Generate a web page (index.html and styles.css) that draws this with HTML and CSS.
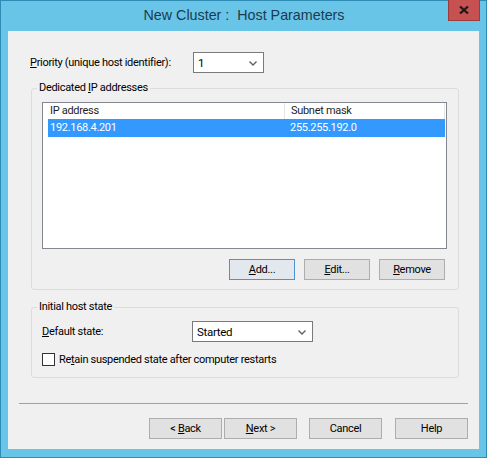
FILE: index.html
```html
<!DOCTYPE html>
<html>
<head>
<meta charset="utf-8">
<link rel="stylesheet" href="styles.css">
</head>
<body>
<div class="window">
  <div class="titlebar">
    <div class="title">New Cluster :&nbsp; Host Parameters</div>
    <div class="close">
      <svg width="10" height="8" viewBox="0 0 10 8"><path d="M1 0.5 L9 7.5 M9 0.5 L1 7.5" stroke="#1a1a1a" stroke-width="2.2" fill="none"/></svg>
    </div>
  </div>
  <div class="client">
    <div class="priority-row">
      <span class="priority-label"><u>P</u>riority (unique host identifier):</span>
      <div class="combo combo-priority">
        <span class="combo-text">1</span>
        <svg class="chev" width="8" height="5" viewBox="0 0 8 5"><path d="M0.5 0.5 L4 4 L7.5 0.5" stroke="#606060" stroke-width="1.4" fill="none"/></svg>
      </div>
    </div>

    <div class="group group-ip">
      <span class="legend">Dedicated <u>I</u>P addresses</span>
      <div class="list">
        <div class="list-head">
          <div class="col col1">IP address</div>
          <div class="col col2">Subnet mask</div>
        </div>
        <div class="list-row selected">
          <div class="col col1">192.168.4.201</div>
          <div class="col col2">255.255.192.0</div>
        </div>
      </div>
      <div class="btn-row">
        <button class="btn btn-default"><span><u>A</u>dd...</span></button>
        <button class="btn"><span><u>E</u>dit...</span></button>
        <button class="btn"><span><u>R</u>emove</span></button>
      </div>
    </div>

    <div class="group group-state">
      <span class="legend">Initial host state</span>
      <div class="state-row">
        <span class="state-label"><u>D</u>efault state:</span>
        <div class="combo combo-state">
          <span class="combo-text">Started</span>
          <svg class="chev" width="8" height="5" viewBox="0 0 8 5"><path d="M0.5 0.5 L4 4 L7.5 0.5" stroke="#606060" stroke-width="1.4" fill="none"/></svg>
        </div>
      </div>
      <div class="check-row">
        <span class="checkbox"></span>
        <span class="check-label">Re<u>t</u>ain suspended state after computer restarts</span>
      </div>
    </div>

    <div class="separator"></div>

    <div class="footer">
      <button class="btn btn-wide"><span>&lt; <u>B</u>ack</span></button>
      <button class="btn btn-wide btn-next"><span><u>N</u>ext &gt;</span></button>
      <button class="btn btn-wide btn-cancel"><span>Cancel</span></button>
      <button class="btn btn-wide btn-help"><span>Help</span></button>
    </div>
  </div>
</div>
</body>
</html>
```
FILE: styles.css
```css
* { box-sizing: border-box; }
html, body { margin: 0; padding: 0; }
body {
  width: 487px;
  height: 458px;
  overflow: hidden;
  font-family: Roboto, "Liberation Sans", Arial, sans-serif;
  font-size: 11px;
  letter-spacing: -0.3px;
  color: #000;
  white-space: nowrap;
}
.window {
  width: 487px;
  height: 458px;
  background: #68c5e8;
  border: 1px solid #2e8bb3;
  display: flex;
  flex-direction: column;
}
.titlebar {
  height: 30px;
  position: relative;
  display: flex;
  justify-content: center;
  align-items: center;
  flex: none;
}
.title {
  font-family: "Liberation Sans", Arial, sans-serif;
  font-size: 14.3px;
  letter-spacing: 0;
  color: #1c3b4f;
  margin-top: -2px;
  margin-left: 1px;
}
.close {
  position: absolute;
  top: -1px;
  right: 6px;
  width: 32px;
  height: 21px;
  background: #c75050;
  border: 1px solid #9c3b3b;
  border-top: none;
  display: flex;
  align-items: center;
  justify-content: center;
}
.client {
  flex: 1;
  margin: 0 7px 8px 7px;
  background: #f0f0f0;
  padding: 21px 11px 0 0;
  display: flex;
  flex-direction: column;
}
.priority-row {
  display: flex;
  align-items: center;
  height: 21px;
  margin-left: 22px;
}
.priority-label { width: 163px; }
.combo {
  height: 21px;
  background: #fff;
  border: 1px solid #7a7a7a;
  display: flex;
  align-items: center;
  justify-content: space-between;
  padding: 0 6px 0 4px;
  font-size: 11.5px;
}
.combo-priority { width: 71px; }
.combo-state { width: 121px; }
.chev { flex: none; margin-top: 1px; }

.group {
  position: relative;
  margin-left: 23px;
  width: 428px;
  border: 1px solid #dcdcdc;
  border-radius: 3px;
}
.legend {
  position: absolute;
  left: 5px;
  top: -8px;
  line-height: 14px;
  padding: 0 2px;
  background: #f0f0f0;
}
.group-ip {
  margin-top: 15px;
  padding: 13px 11px 9px 10px;
  height: 202px;
}
.list {
  height: 147px;
  background: #fff;
  border: 1px solid #828790;
}
.list-head {
  display: flex;
  height: 16px;
  line-height: 16px;
  color: #1e1e1e;
}
.list-head .col1 {
  width: 242px;
  padding-left: 7px;
  border-right: 1px solid #e5e5e5;
}
.list-head .col2 {
  width: 160px;
  padding-left: 6px;
  border-right: 1px solid #e5e5e5;
}
.list-row {
  display: flex;
  height: 18px;
  line-height: 18px;
  margin-left: 5px;
  width: 397px;
}
.list-row.selected {
  background: #3399ff;
  color: #fff;
}
.list-row .col1 { width: 237px; padding-left: 2px; }
.list-row .col2 { padding-left: 5px; }

.btn-row {
  display: flex;
  justify-content: flex-end;
  gap: 9px;
  margin-top: 10px;
  margin-right: 2px;
}
.btn {
  font-family: inherit;
  font-size: inherit;
  letter-spacing: inherit;
  color: #000;
  width: 66px;
  height: 21px;
  line-height: 19px;
  padding: 0;
  background: #e1e1e1;
  border: 1px solid #adadad;
  border-radius: 0;
  text-align: center;
  white-space: pre;
}
.btn-default { border-color: #4c94d0; background: #e3e8ee; }

.group-state {
  margin-top: 17px;
  height: 71px;
  padding: 13px 10px 11px 10px;
}
.state-row {
  display: flex;
  align-items: center;
  height: 21px;
}
.state-label { width: 150px; }
.check-row {
  display: flex;
  align-items: center;
  margin-top: 11px;
  height: 13px;
}
.checkbox {
  width: 13px;
  height: 13px;
  background: #fff;
  border: 1px solid #333;
  flex: none;
}
.check-label { margin-left: 4px; }

.separator {
  margin-top: 25px;
  margin-left: 11px;
  height: 1px;
  background: #a0a0a0;
}
.footer {
  display: flex;
  justify-content: flex-end;
  margin-top: 14px;
}
.btn-wide { width: 73px; }
.btn-next { margin-left: 2px; }
.btn-cancel { margin-left: 12px; }
.btn-help { margin-left: 13px; }
```
